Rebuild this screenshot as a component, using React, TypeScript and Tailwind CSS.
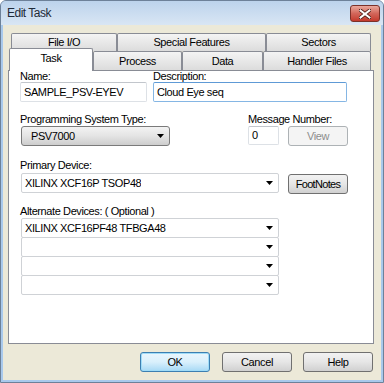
import React from "react";

type TabProps = {
    label: string,
    width: string,
}

function BackTab({label, width}: TabProps) {
    return (
        <div className={`${width} h-full flex items-center justify-center border border-[#898c95] border-b-0 rounded-t-[2px] bg-gradient-to-b from-[#f4f4f4] to-[#dcdcdc]`}>
            {label}
        </div>
    )
}

function FrontTab({label, width}: TabProps) {
    return (
        <div className={`${width} h-[19px] flex items-center justify-center border border-[#898c95] border-b-0 rounded-t-[2px] bg-gradient-to-b from-[#f4f4f4] to-[#dcdcdc]`}>
            {label}
        </div>
    )
}

function Arrow() {
    return (
        <svg width="7" height="4" viewBox="0 0 7 4" className="shrink-0">
            <path d="M0 0 H7 L3.5 4 Z" fill="#000" />
        </svg>
    )
}

function DeviceCombo({value, extra}: {value: string, extra?: string}) {
    return (
        <div className={`w-[258px] h-[20px] flex items-center justify-between pl-[3px] pr-[5px] bg-white border border-[#cfd2d6] rounded-[2px] ${extra ?? ""}`}>
            <span className="truncate">{value}</span>
            <Arrow />
        </div>
    )
}

function Button({label, extra}: {label: string, extra?: string}) {
    return (
        <div className={`w-[70px] h-[20px] flex items-center justify-center rounded-[3px] border ${extra ?? "border-[#707070] bg-gradient-to-b from-[#f2f2f2] via-[#e6e6e6] to-[#d0d0d0]"}`}>
            {label}
        </div>
    )
}

export default function App() {
    return (
        <div className="w-[384px] h-[383px] flex flex-col bg-[#a9c9ec] border border-[#6d8199] rounded-t-[6px] font-['Liberation_Sans',Arial,sans-serif] text-[11px] tracking-[-0.4px] text-black overflow-hidden">
            {/* title bar */}
            <div className="h-[24px] shrink-0 flex items-center justify-between pl-[6px] pr-[3px] bg-gradient-to-b from-[#bcd3ec] to-[#d9e6f4]">
                <span className="text-[12px] tracking-[-0.5px] text-[#1e2a38]">Edit Task</span>
                <div className="w-[30px] h-[17px] mt-[1px] flex items-center justify-center rounded-[3px] border border-[#7b3129] bg-gradient-to-b from-[#e9a89c] via-[#d2665a] to-[#c4392c]">
                    <svg width="12" height="10" viewBox="0 0 12 10">
                        <path d="M1 1 L11 9 M11 1 L1 9" stroke="#4a1a14" strokeWidth="3.6" strokeLinecap="square" />
                        <path d="M1.5 1.5 L10.5 8.5 M10.5 1.5 L1.5 8.5" stroke="#fff" strokeWidth="2" strokeLinecap="square" />
                    </svg>
                </div>
            </div>

            {/* client */}
            <div className="flex-1 mx-[2px] mb-[2px] bg-[#ece9d8] flex flex-col pt-[8px] pl-[5px]">
                <div className="flex h-[18px] ml-[3px]">
                    <BackTab label="File I/O" width="w-[106px]" />
                    <BackTab label="Special Features" width="w-[149px]" />
                    <BackTab label="Sectors" width="w-[105px]" />
                </div>
                <div className="flex h-[19px] items-end ml-[1px]">
                    <div className="relative z-10 w-[84px] h-[23px] -mb-px pb-[4px] flex items-center justify-center bg-white border border-[#898c95] border-b-0 rounded-t-[2px]">
                        Task
                    </div>
                    <FrontTab label="Process" width="w-[89px]" />
                    <FrontTab label="Data" width="w-[81px]" />
                    <FrontTab label="Handler Files" width="w-[108px]" />
                </div>

                {/* panel */}
                <div className="w-[366px] h-[274px] bg-white border border-[#898c95] pl-[11px] flex flex-col leading-[11px]">
                    <div className="flex gap-[6px]">
                        <div className="flex flex-col w-[127px]">
                            <span>Name:</span>
                            <div className="h-[20px] flex items-center px-[3px] border border-[#dde1e6] border-t-[#c2c6cc] rounded-[2px]">SAMPLE_PSV-EYEV</div>
                        </div>
                        <div className="flex flex-col w-[194px]">
                            <span>Description:</span>
                            <div className="h-[20px] flex items-center px-[3px] border border-[#85b6e4] border-t-[#5e9ad6] rounded-[2px]">Cloud Eye seq</div>
                        </div>
                    </div>

                    <div className="flex mt-[12px]">
                        <div className="flex flex-col w-[228px]">
                            <span>Programming System Type:</span>
                            <div className="w-[149px] h-[20px] mt-[1px] ml-[1px] flex items-center justify-between pl-[9px] pr-[5px] border border-[#7a7a7a] rounded-[3px] bg-gradient-to-b from-[#f3f3f3] via-[#e4e4e4] to-[#cdcdcd]">
                                <span>PSV7000</span>
                                <Arrow />
                            </div>
                        </div>
                        <div className="flex flex-col">
                            <span>Message Number:</span>
                            <div className="flex mt-[1px] gap-[9px]">
                                <div className="w-[31px] h-[19px] flex items-center px-[3px] border border-[#dde1e6] border-t-[#c2c6cc] rounded-[2px]">0</div>
                                <div className="w-[60px] h-[20px] flex items-center justify-center rounded-[3px] border border-[#adb2b5] bg-[#f4f4f4] text-[#8d8d8d]">View</div>
                            </div>
                        </div>
                    </div>

                    <span className="mt-[14px]">Primary Device:</span>
                    <div className="flex mt-[2px] ml-[1px] gap-[9px]">
                        <DeviceCombo value="XILINX XCF16P TSOP48" />
                        <div className="w-[60px] h-[20px] mt-[1px] flex items-center justify-center rounded-[3px] border border-[#707070] bg-gradient-to-b from-[#f2f2f2] via-[#e6e6e6] to-[#d0d0d0] tracking-[-0.7px]">FootNotes</div>
                    </div>

                    <span className="mt-[12px]">Alternate Devices: ( Optional )</span>
                    <div className="flex flex-col mt-[1px] ml-[1px]">
                        <DeviceCombo value="XILINX XCF16PF48 TFBGA48" />
                        <DeviceCombo value="" extra="-mt-px" />
                        <DeviceCombo value="" extra="-mt-px" />
                        <DeviceCombo value="" extra="-mt-px" />
                    </div>
                </div>

                {/* buttons */}
                <div className="flex mt-[8px] ml-[132px]">
                    <Button label="OK" extra="border-[#3c7fb1] bg-gradient-to-b from-[#eaf6fd] via-[#d9f0fc] to-[#a7d9f5] shadow-[inset_0_0_0_1px_#9fdcf8]" />
                    <div className="ml-[12px]"><Button label="Cancel" /></div>
                    <div className="ml-[11px]"><Button label="Help" /></div>
                </div>
            </div>
        </div>
    )
}
